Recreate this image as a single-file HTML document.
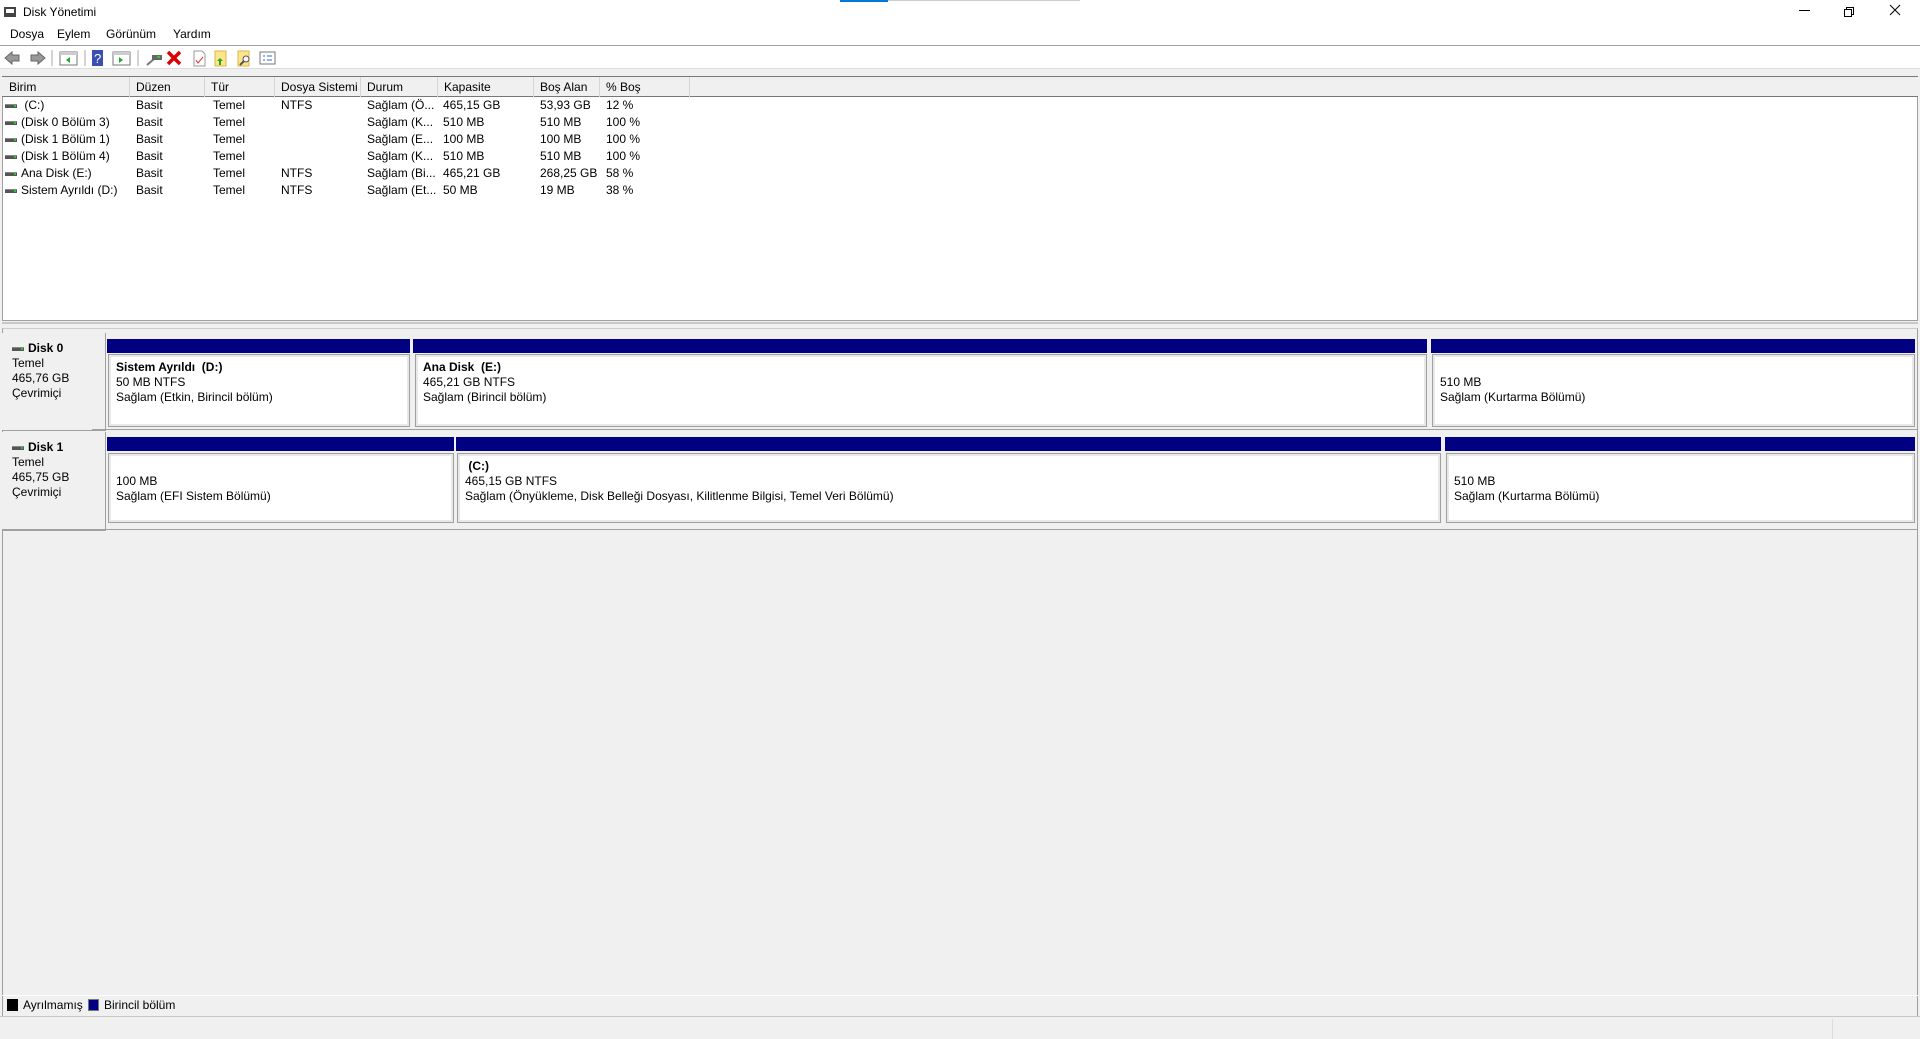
<!DOCTYPE html>
<html><head><meta charset="utf-8"><style>
*{margin:0;padding:0;box-sizing:border-box}
body{width:1920px;height:1039px;background:#f0f0f0;font-family:"Liberation Sans",sans-serif;font-size:12px;color:#000;position:relative;overflow:hidden}
.a{position:absolute}
.t{position:absolute;white-space:nowrap;line-height:15px}
.hdr{position:absolute;top:77px;height:20px;border-right:1px solid #d5d5d5;padding:3px 6px;white-space:nowrap}
.row{position:absolute;left:2px;height:17px;white-space:nowrap}
.row span{position:absolute;top:1px}
.di{display:inline-block;width:12px;height:4px;background:#555;border-top:1px solid #888;vertical-align:middle;margin-right:4px;position:relative}
.di:after{content:"";position:absolute;right:1px;top:0;width:2px;height:2px;background:#2c2}
.lab{position:absolute;left:2px;width:104px;background:#f0f0f0;border-right:1px solid #a0a0a0;border-bottom:1px solid #a0a0a0;padding:8px 10px;line-height:15px}
.bar{position:absolute;height:14px;background:#000080}
.box{position:absolute;background:#fff;border:2px solid #e8e8e8;outline:1px solid #a0a0a0;padding:3px 5px;line-height:15px}
</style></head><body>
<div class="a" style="left:0;top:0;width:1920px;height:30px;background:#fff"></div>
<div class="a" style="left:4px;top:7px;width:12px;height:10px;border:2px solid #444;border-bottom-width:4px"></div>
<div class="t" style="left:23px;top:5px">Disk Yönetimi</div>
<div class="a" style="left:840px;top:0;width:48px;height:2px;background:#0078d7"></div>
<div class="a" style="left:888px;top:0;width:192px;height:1px;background:#ccc"></div>
<div class="a" style="left:1799px;top:10px;width:11px;height:1px;background:#000"></div>
<div class="a" style="left:1846px;top:7px;width:8px;height:8px;border:1px solid #000"></div>
<div class="a" style="left:1844px;top:9px;width:8px;height:8px;border:1px solid #000;background:#fff"></div>
<svg class="a" style="left:1889px;top:4px" width="12" height="12"><path d="M1 1L11 11M11 1L1 11" stroke="#000" stroke-width="1"/></svg>
<div class="a" style="left:0;top:30px;width:1920px;height:15px;background:#fff"></div>
<div class="t" style="left:10px;top:27px">Dosya</div>
<div class="t" style="left:57px;top:27px">Eylem</div>
<div class="t" style="left:106px;top:27px">Görünüm</div>
<div class="t" style="left:173px;top:27px">Yardım</div>
<div class="a" style="left:0;top:45px;width:1920px;height:1px;background:#a0a0a0"></div>
<div class="a" style="left:0;top:46px;width:1920px;height:22px;background:#fff"></div>
<div class="a" style="left:0;top:68px;width:1920px;height:1px;background:#ddd"></div>
<svg class="a" style="left:4px;top:49px" width="290" height="18">
<path d="M1 9 L8 3 V6 H15 V12 H8 V15 Z" fill="#999" stroke="#666"/>
<path d="M41 9 L34 3 V6 H27 V12 H34 V15 Z" fill="#999" stroke="#666"/>
<line x1="48" y1="1" x2="48" y2="17" stroke="#aaa"/>
<rect x="56" y="3" width="17" height="13" fill="#fff" stroke="#777"/><rect x="56" y="3" width="17" height="3" fill="#ccc"/><path d="M66 8 L62 11 L66 14Z" fill="#2a2"/>
<line x1="81" y1="1" x2="81" y2="17" stroke="#aaa"/>
<rect x="88" y="1" width="11" height="16" fill="#3a4fb0"/><text x="90" y="14" fill="#fff" font-size="13" font-family="Liberation Sans">?</text>
<rect x="109" y="3" width="17" height="13" fill="#fff" stroke="#777"/><rect x="109" y="3" width="17" height="3" fill="#ccc"/><path d="M115 8 L119 11 L115 14Z" fill="#2a2"/>
<line x1="134" y1="1" x2="134" y2="17" stroke="#aaa"/>
<path d="M143 16 L150 10" stroke="#777" stroke-width="2"/><rect x="148" y="6" width="10" height="5" fill="#666"/><rect x="153" y="7" width="3" height="2" fill="#3c3"/>
<path d="M164 3 L176 15 M176 3 L164 15" stroke="#d00" stroke-width="3.5"/>
<path d="M190 2 H198 L201 5 V17 H190 Z" fill="#fff" stroke="#999"/><path d="M192 11 L194 14 L199 8" stroke="#e33" fill="none"/>
<rect x="211" y="2" width="11" height="15" fill="#fde58a" stroke="#d9b84a"/><path d="M216 9 L219 12 H217 V16 H215 V12 H213Z" fill="#2a2"/>
<rect x="234" y="2" width="11" height="15" fill="#fde58a" stroke="#d9b84a"/><circle cx="242" cy="10" r="3" fill="#fff" stroke="#555"/><path d="M240 12 L236 16" stroke="#555" stroke-width="2"/>
<rect x="256" y="3" width="15" height="12" fill="#fff" stroke="#777"/><path d="M259 7h2 M263 7h5 M259 11h2 M263 11h5" stroke="#36c"/>
</svg>
<div class="a" style="left:2px;top:76px;width:1916px;height:245px;background:#fff;border:1px solid #a0a0a0"></div>
<div class="a" style="left:2px;top:76px;width:1916px;height:21px;background:#f0f0f0;border-top:1px solid #777;border-bottom:1px solid #777"></div>
<div class="hdr" style="left:3px;width:127px">Birim</div>
<div class="hdr" style="left:130px;width:75px">Düzen</div>
<div class="hdr" style="left:205px;width:70px">Tür</div>
<div class="hdr" style="left:275px;width:86px">Dosya Sistemi</div>
<div class="hdr" style="left:361px;width:77px">Durum</div>
<div class="hdr" style="left:438px;width:96px">Kapasite</div>
<div class="hdr" style="left:534px;width:66px">Boş Alan</div>
<div class="hdr" style="left:600px;width:90px">% Boş</div>

<div class="row" style="top:97px"><span style="left:3px"><i class="di"></i> (C:)</span><span style="left:134px">Basit</span><span style="left:211px">Temel</span><span style="left:279px">NTFS</span><span style="left:365px">Sağlam (Ö...</span><span style="left:441px">465,15 GB</span><span style="left:538px">53,93 GB</span><span style="left:604px">12 %</span></div>
<div class="row" style="top:114px"><span style="left:3px"><i class="di"></i>(Disk 0 Bölüm 3)</span><span style="left:134px">Basit</span><span style="left:211px">Temel</span><span style="left:365px">Sağlam (K...</span><span style="left:441px">510 MB</span><span style="left:538px">510 MB</span><span style="left:604px">100 %</span></div>
<div class="row" style="top:131px"><span style="left:3px"><i class="di"></i>(Disk 1 Bölüm 1)</span><span style="left:134px">Basit</span><span style="left:211px">Temel</span><span style="left:365px">Sağlam (E...</span><span style="left:441px">100 MB</span><span style="left:538px">100 MB</span><span style="left:604px">100 %</span></div>
<div class="row" style="top:148px"><span style="left:3px"><i class="di"></i>(Disk 1 Bölüm 4)</span><span style="left:134px">Basit</span><span style="left:211px">Temel</span><span style="left:365px">Sağlam (K...</span><span style="left:441px">510 MB</span><span style="left:538px">510 MB</span><span style="left:604px">100 %</span></div>
<div class="row" style="top:165px"><span style="left:3px"><i class="di"></i>Ana Disk (E:)</span><span style="left:134px">Basit</span><span style="left:211px">Temel</span><span style="left:279px">NTFS</span><span style="left:365px">Sağlam (Bi...</span><span style="left:441px">465,21 GB</span><span style="left:538px">268,25 GB</span><span style="left:604px">58 %</span></div>
<div class="row" style="top:182px"><span style="left:3px"><i class="di"></i>Sistem Ayrıldı (D:)</span><span style="left:134px">Basit</span><span style="left:211px">Temel</span><span style="left:279px">NTFS</span><span style="left:365px">Sağlam (Et...</span><span style="left:441px">50 MB</span><span style="left:538px">19 MB</span><span style="left:604px">38 %</span></div>

<div class="a" style="left:2px;top:322px;width:1916px;height:2px;background:#c8c8c8"></div>
<div class="a" style="left:2px;top:328px;width:1916px;height:688px;border-left:1px solid #a0a0a0;border-right:1px solid #a0a0a0;border-top:1px solid #ccc"></div>

<div class="lab" style="top:333px;height:98px"><b><i class="di"></i>Disk 0</b><br>Temel<br>465,76 GB<br>Çevrimiçi</div>
<div class="bar" style="left:107px;top:339px;width:303px"></div>
<div class="bar" style="left:413px;top:339px;width:1014px"></div>
<div class="bar" style="left:1431px;top:339px;width:484px"></div>
<div class="box" style="left:109px;top:355px;width:300px;height:71px"><b>Sistem Ayrıldı &nbsp;(D:)</b><br>50 MB NTFS<br>Sağlam (Etkin, Birincil bölüm)</div>
<div class="box" style="left:416px;top:355px;width:1010px;height:71px"><b>Ana Disk &nbsp;(E:)</b><br>465,21 GB NTFS<br>Sağlam (Birincil bölüm)</div>
<div class="box" style="left:1433px;top:355px;width:481px;height:71px"><br>510 MB<br>Sağlam (Kurtarma Bölümü)</div>
<div class="a" style="left:92px;top:429px;width:1826px;height:1px;background:#a0a0a0"></div>

<div class="lab" style="top:432px;height:99px"><b><i class="di"></i>Disk 1</b><br>Temel<br>465,75 GB<br>Çevrimiçi</div>
<div class="bar" style="left:107px;top:437px;width:347px"></div>
<div class="bar" style="left:456px;top:437px;width:985px"></div>
<div class="bar" style="left:1445px;top:437px;width:470px"></div>
<div class="box" style="left:109px;top:454px;width:344px;height:68px"><br>100 MB<br>Sağlam (EFI Sistem Bölümü)</div>
<div class="box" style="left:458px;top:454px;width:982px;height:68px">&nbsp;<b>(C:)</b><br>465,15 GB NTFS<br>Sağlam (Önyükleme, Disk Belleği Dosyası, Kilitlenme Bilgisi, Temel Veri Bölümü)</div>
<div class="box" style="left:1447px;top:454px;width:467px;height:68px"><br>510 MB<br>Sağlam (Kurtarma Bölümü)</div>
<div class="a" style="left:2px;top:529px;width:1916px;height:1px;background:#a0a0a0"></div>

<div class="a" style="left:2px;top:995px;width:1916px;height:1px;background:#fff"></div>
<div class="a" style="left:7px;top:999px;width:11px;height:12px;background:#000"></div>
<div class="t" style="left:23px;top:998px">Ayrılmamış</div>
<div class="a" style="left:88px;top:999px;width:11px;height:12px;background:#000080;border:1px solid #777"></div>
<div class="t" style="left:104px;top:998px">Birincil bölüm</div>
<div class="a" style="left:0;top:1016px;width:1920px;height:1px;background:#c8c8c8"></div>
<div class="a" style="left:1832px;top:1019px;width:1px;height:20px;background:#ddd"></div>
</body></html>
